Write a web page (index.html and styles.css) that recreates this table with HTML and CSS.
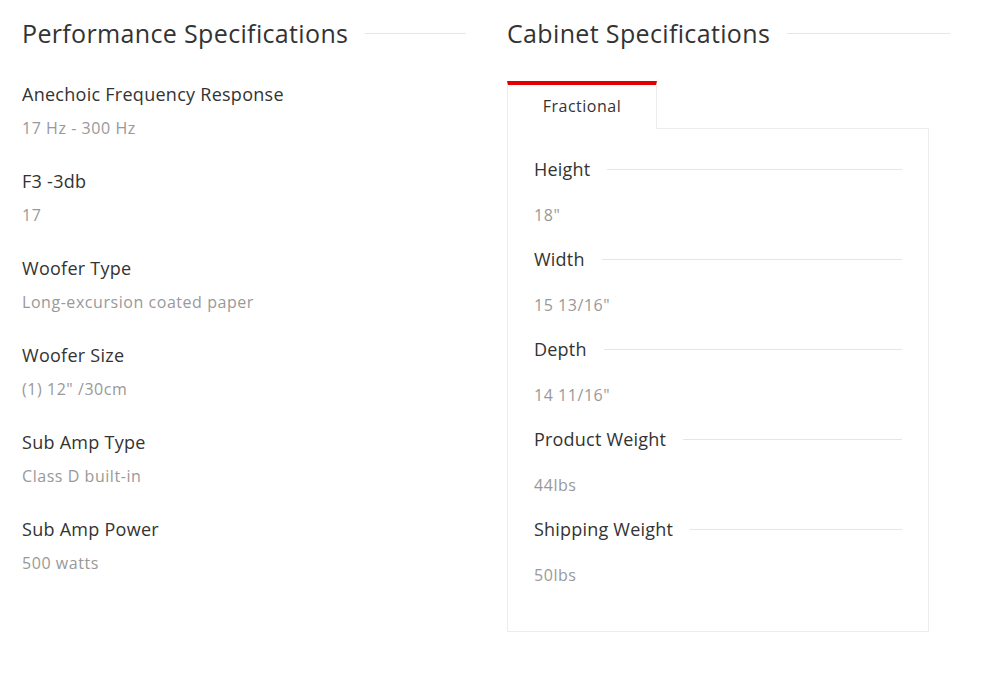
FILE: index.html
```html
<!DOCTYPE html>
<html>
<head>
    <title>Specifications</title>
    <link rel="stylesheet" href="styles.css">
</head>
<body>
    <div class="container">
        <section class="column">
            <h2 class="section-title"><span>Performance Specifications</span><i class="rule"></i></h2>
            <dl class="specs">
                <div class="spec">
                    <dt>Anechoic Frequency Response</dt>
                    <dd>17 Hz - 300 Hz</dd>
                </div>
                <div class="spec">
                    <dt>F3 -3db</dt>
                    <dd>17</dd>
                </div>
                <div class="spec">
                    <dt>Woofer Type</dt>
                    <dd>Long-excursion coated paper</dd>
                </div>
                <div class="spec">
                    <dt>Woofer Size</dt>
                    <dd>(1) 12" /30cm</dd>
                </div>
                <div class="spec">
                    <dt>Sub Amp Type</dt>
                    <dd>Class D built-in</dd>
                </div>
                <div class="spec">
                    <dt>Sub Amp Power</dt>
                    <dd>500 watts</dd>
                </div>
            </dl>
        </section>
        <section class="column">
            <h2 class="section-title"><span>Cabinet Specifications</span><i class="rule"></i></h2>
            <div class="tabs">
                <div class="tab active">Fractional</div>
            </div>
            <div class="panel">
                <div class="dim">
                    <div class="dim-label"><span>Height</span><i class="rule"></i></div>
                    <div class="dim-value">18"</div>
                </div>
                <div class="dim">
                    <div class="dim-label"><span>Width</span><i class="rule"></i></div>
                    <div class="dim-value">15 13/16"</div>
                </div>
                <div class="dim">
                    <div class="dim-label"><span>Depth</span><i class="rule"></i></div>
                    <div class="dim-value">14 11/16"</div>
                </div>
                <div class="dim">
                    <div class="dim-label"><span>Product Weight</span><i class="rule"></i></div>
                    <div class="dim-value">44lbs</div>
                </div>
                <div class="dim">
                    <div class="dim-label"><span>Shipping Weight</span><i class="rule"></i></div>
                    <div class="dim-value">50lbs</div>
                </div>
            </div>
        </section>
    </div>
</body>
</html>
```

FILE: styles.css
```css
* {
    box-sizing: border-box;
    margin: 0;
    padding: 0;
}

body {
    background-color: #fff;
    font-family: "Open Sans", "Liberation Sans", sans-serif;
    color: #333;
}

.container {
    display: grid;
    grid-template-columns: 444px 443px;
    gap: 41px;
    padding: 16px 22px 0;
}

.section-title {
    display: flex;
    align-items: center;
    gap: 17px;
    font-size: 25px;
    font-weight: normal;
    letter-spacing: 0.35px;
    line-height: 34px;
    color: #333;
}

.rule {
    flex: 1;
    height: 1px;
    background-color: #e6e6e6;
}

.specs {
    margin-top: 31px;
}

.spec {
    height: 87px;
}

.spec dt {
    font-size: 18px;
    letter-spacing: 0.27px;
    line-height: 26px;
    color: #333;
}

.spec dd {
    margin-top: 10px;
    font-size: 16px;
    letter-spacing: 0.55px;
    line-height: 22px;
    color: #999;
}

.tabs {
    display: flex;
    margin-top: 31px;
}

.tab {
    width: 150px;
    height: 48px;
    margin-bottom: -1px;
    border-top: 4px solid #e10000;
    border-left: 1px solid #ececec;
    border-right: 1px solid #ececec;
    background-color: #fff;
    text-align: center;
    font-size: 16px;
    letter-spacing: 0.5px;
    line-height: 42px;
    color: #333;
    position: relative;
}

.panel {
    width: 422px;
    height: 504px;
    border: 1px solid #ececec;
    padding: 27px 26px 0;
}

.dim {
    height: 90px;
}

.dim-label {
    display: flex;
    align-items: center;
    gap: 17px;
    font-size: 18px;
    letter-spacing: 0.2px;
    line-height: 26px;
    color: #333;
}

.dim-value {
    margin-top: 22px;
    font-size: 16px;
    letter-spacing: 0.55px;
    line-height: 22px;
    color: #999;
}
```
